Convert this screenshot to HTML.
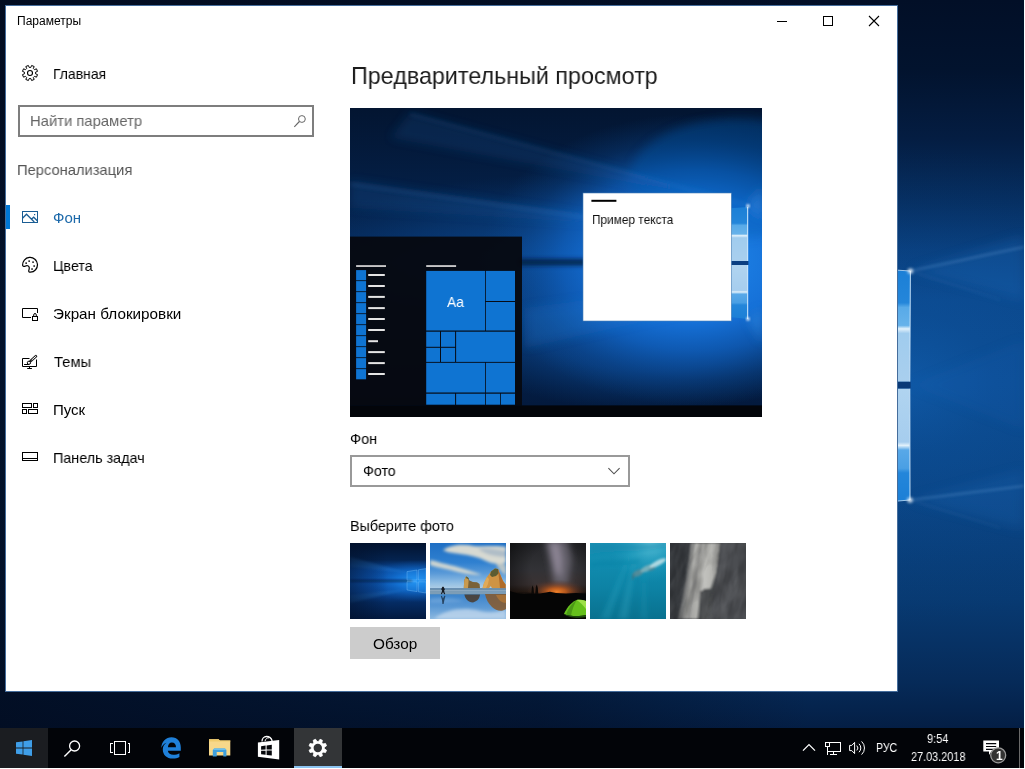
<!DOCTYPE html>
<html lang="ru">
<head>
<meta charset="utf-8">
<title>Параметры</title>
<style>
html,body{margin:0;padding:0;}
body{width:1025px;height:769px;background:#fff;overflow:hidden;position:relative;font-family:"Liberation Sans",sans-serif;color:#000;}
.abs{position:absolute;}
#desk{position:absolute;left:0;top:0;width:1024px;height:768px;overflow:hidden;background:#03122c;}
#win{position:absolute;left:5px;top:5px;width:891px;height:685px;background:#fff;border:1px solid #456d9c;}
.t{position:absolute;white-space:nowrap;line-height:1;transform-origin:0 0;will-change:transform;}
.nav{font-size:15px;color:#000;}
#taskbar{position:absolute;left:0;top:728px;width:1024px;height:40px;background:#020408;}

.ic{position:absolute;overflow:visible;}
.k{color:#000;}
</style>
</head>
<body>
<div id="desk">
<svg class="abs" style="left:0;top:0" width="1024" height="768" viewBox="0 0 1024 768">
<defs>
<linearGradient id="dbg" x1="0" y1="0" x2="0" y2="1">
<stop offset="0" stop-color="#020f27"/><stop offset="0.09" stop-color="#02132e"/><stop offset="0.18" stop-color="#041d42"/><stop offset="0.26" stop-color="#062e60"/><stop offset="0.325" stop-color="#093e7c"/><stop offset="0.39" stop-color="#0b488c"/><stop offset="0.5" stop-color="#0b4a8e"/><stop offset="0.64" stop-color="#0a4484"/><stop offset="0.78" stop-color="#083a72"/><stop offset="0.89" stop-color="#062a58"/><stop offset="0.95" stop-color="#041e44"/><stop offset="1" stop-color="#03132e"/>
</linearGradient>
<radialGradient id="dglow" cx="905" cy="385" r="300" gradientUnits="userSpaceOnUse" gradientTransform="translate(905 385) scale(1 0.8) translate(-905 -385)">
<stop offset="0" stop-color="#1a7adc" stop-opacity="0.3"/><stop offset="0.3" stop-color="#1266c0" stop-opacity="0.14"/><stop offset="1" stop-color="#0a4a90" stop-opacity="0"/>
</radialGradient>
<linearGradient id="dleft" x1="0" y1="0" x2="1" y2="0"><stop offset="0" stop-color="#020c20" stop-opacity="0.9"/><stop offset="0.6" stop-color="#020c20" stop-opacity="0.55"/><stop offset="0.9" stop-color="#020c20" stop-opacity="0"/></linearGradient>
<filter id="b6" x="-20%" y="-20%" width="140%" height="140%"><feGaussianBlur stdDeviation="6"/></filter>
<filter id="b2" x="-20%" y="-20%" width="140%" height="140%"><feGaussianBlur stdDeviation="1.5"/></filter>
</defs>
<rect width="1024" height="768" fill="url(#dbg)"/>
<rect width="1024" height="768" fill="url(#dglow)"/>
<rect width="900" height="768" fill="url(#dleft)"/>
<g filter="url(#b6)" opacity="0.5">
<polygon points="910,271 1024,236 1024,300" fill="#2a80d8" opacity="0.4"/>
<polygon points="910,500 1024,470 1024,530" fill="#2a80d8" opacity="0.3"/>
<polygon points="910,385 1024,340 1024,430" fill="#1f74d0" opacity="0.2"/>
</g>
<g>
<polygon points="880,269 910.4,271 909.8,381.8 880,381.8" fill="url(#ppu)"/>
<polygon points="880,388.4 909.8,388.4 910,500 880,502.5" fill="url(#ppl)"/>
<path d="M910.4 271L909.8 381.8M909.8 388.4L910 500" stroke="#cfe8fb" stroke-width="1.1" fill="none" opacity="0.85"/>
<path d="M880 269L910.4 271M880 502.5L910 500" stroke="#bfe0fa" stroke-width="1" fill="none" opacity="0.8"/>
<rect x="880" y="381.8" width="30.6" height="6.6" fill="#0a3a78"/>
</g>
<g filter="url(#b2)"><circle cx="910.4" cy="271" r="2.6" fill="#fff" opacity="0.9"/><circle cx="910" cy="500" r="2.6" fill="#fff" opacity="0.9"/>
<path d="M910 271L1024 247M910 500L1024 486" stroke="#9fd0ff" stroke-width="1.4" opacity="0.3" fill="none"/><path d="M910 271L1000 300M910 500L1000 528" stroke="#9fd0ff" stroke-width="1.2" opacity="0.12" fill="none"/></g>
</svg>
</div>

<div id="win"></div>
<div id="ui">
<span class="t" style="left:17.4px;top:15.24px;font-size:12px;color:#000;transform:scaleX(1.003);">Параметры</span>
<svg class="ic" style="left:777px;top:16px" width="110" height="11" viewBox="0 0 110 11"><path d="M0 5.5H10" stroke="#000" stroke-width="1" fill="none" shape-rendering="crispEdges"/><rect x="46.5" y="0.5" width="9" height="9" stroke="#000" stroke-width="1" fill="none" shape-rendering="crispEdges"/><path d="M92 0L102 10M102 0L92 10" stroke="#000" stroke-width="1.1" fill="none"/></svg>
<span class="t" style="left:53.3px;top:65.90px;font-size:15px;color:#000;transform:scaleX(0.93);">Главная</span>
<div class="abs" style="left:18px;top:105px;width:292px;height:28px;border:2px solid #7e7e7e;background:#fff"></div>
<span class="t" style="left:29.7px;top:113.10px;font-size:15px;color:#666;transform:scaleX(0.987);">Найти параметр</span>
<span class="t" style="left:16.7px;top:162.30px;font-size:15px;color:#555;transform:scaleX(0.981);">Персонализация</span>
<div class="abs" style="left:6px;top:205px;width:4px;height:24px;background:#0078d7"></div>
<span class="t" style="left:53.3px;top:209.70px;font-size:15px;color:#1c69aa;transform:scaleX(1.0);">Фон</span>
<span class="t" style="left:53.3px;top:257.90px;font-size:15px;color:#000;transform:scaleX(0.947);">Цвета</span>
<span class="t" style="left:53.3px;top:306.10px;font-size:15px;color:#000;transform:scaleX(1.017);">Экран блокировки</span>
<span class="t" style="left:53.8px;top:353.70px;font-size:15px;color:#000;transform:scaleX(0.983);">Темы</span>
<span class="t" style="left:53.3px;top:401.90px;font-size:15px;color:#000;transform:scaleX(0.988);">Пуск</span>
<span class="t" style="left:53.3px;top:450.10px;font-size:15px;color:#000;transform:scaleX(0.957);">Панель задач</span>
<span class="t" style="left:351px;top:63.88px;font-size:24px;color:#1c1c1c;transform:scaleX(0.9716);">Предварительный просмотр</span>
<div id="preview" class="abs" style="left:350px;top:108px;width:412px;height:309px;background:#04204a;overflow:hidden"><svg class="abs" style="left:0;top:0" width="412" height="309" viewBox="0 0 412 309">
<defs>
<linearGradient id="pbg" x1="0" y1="0" x2="0" y2="1">
<stop offset="0" stop-color="#031531"/><stop offset="0.3" stop-color="#042048"/><stop offset="0.5" stop-color="#062c5e"/><stop offset="0.72" stop-color="#052552"/><stop offset="1" stop-color="#03183a"/>
</linearGradient>
<radialGradient id="pglow" cx="345" cy="152" r="215" gradientUnits="userSpaceOnUse" gradientTransform="translate(345 152) scale(1 0.68) translate(-345 -152)">
<stop offset="0" stop-color="#2088ec" stop-opacity="1"/><stop offset="0.42" stop-color="#1672da" stop-opacity="0.97"/><stop offset="0.62" stop-color="#1062c2" stop-opacity="0.7"/><stop offset="0.82" stop-color="#0c50a0" stop-opacity="0.28"/><stop offset="1" stop-color="#0a4a90" stop-opacity="0"/>
</radialGradient>
<radialGradient id="pglow3" cx="300" cy="215" r="210" gradientUnits="userSpaceOnUse" gradientTransform="translate(300 215) scale(1 0.42) translate(-300 -215)">
<stop offset="0" stop-color="#1268cc" stop-opacity="0.75"/><stop offset="0.55" stop-color="#0e58b0" stop-opacity="0.45"/><stop offset="1" stop-color="#0a4a90" stop-opacity="0"/>
</radialGradient>
<radialGradient id="pglow2" cx="230" cy="150" r="300" gradientUnits="userSpaceOnUse" gradientTransform="translate(230 150) scale(1 0.28) translate(-230 -150)">
<stop offset="0" stop-color="#1266c4" stop-opacity="0.55"/><stop offset="0.6" stop-color="#0e58ac" stop-opacity="0.25"/><stop offset="1" stop-color="#0a4a90" stop-opacity="0"/>
</radialGradient>
<linearGradient id="ppu" x1="0" y1="0" x2="0" y2="1"><stop offset="0" stop-color="#1b7fd6"/><stop offset="0.3" stop-color="#2486da"/><stop offset="0.34" stop-color="#58aae8"/><stop offset="0.5" stop-color="#66b2ea"/><stop offset="0.53" stop-color="#e2f1fb"/><stop offset="0.57" stop-color="#a0ccee"/><stop offset="1" stop-color="#a9cfee"/></linearGradient>
<linearGradient id="ppl" x1="0" y1="0" x2="0" y2="1"><stop offset="0" stop-color="#b0d4f0"/><stop offset="0.47" stop-color="#a6cdee"/><stop offset="0.5" stop-color="#e2f1fb"/><stop offset="0.54" stop-color="#58a8e8"/><stop offset="0.7" stop-color="#4a9fe4"/><stop offset="0.74" stop-color="#2486da"/><stop offset="1" stop-color="#1b7fd6"/></linearGradient>
<filter id="pb5" x="-20%" y="-20%" width="140%" height="140%"><feGaussianBlur stdDeviation="5"/></filter>
<filter id="pb2" x="-20%" y="-20%" width="140%" height="140%"><feGaussianBlur stdDeviation="2"/></filter>
<filter id="pb1" x="-20%" y="-20%" width="140%" height="140%"><feGaussianBlur stdDeviation="0.8"/></filter>
</defs>
<rect width="412" height="309" fill="url(#pbg)"/>
<rect width="412" height="309" fill="url(#pglow2)"/>
<rect width="412" height="309" fill="url(#pglow3)"/>
<rect width="412" height="309" fill="url(#pglow)"/>
<g filter="url(#pb5)">
<polygon points="400,97 60,4 40,30" fill="#2a86e0" opacity="0.13"/>
<polygon points="330,120 0,72 0,100" fill="#2a86e0" opacity="0.14"/>
<ellipse cx="390" cy="70" rx="110" ry="60" fill="#0e58b0" opacity="0.35"/>
<polygon points="330,180 175,200 175,240 330,205" fill="#2a86e0" opacity="0.2"/>
<polygon points="398,98 412,80 412,110" fill="#3a96ee" opacity="0.4"/>
<polygon points="398,211 412,200 412,235" fill="#3a96ee" opacity="0.4"/>
</g>
<g filter="url(#pb2)">
<rect x="168" y="151" width="80" height="6.5" fill="#031938" opacity="0.8"/>
<path d="M398 97L60 6" stroke="#4aa0f0" stroke-width="1.4" opacity="0.22"/>
<path d="M330 122L0 76" stroke="#4aa0f0" stroke-width="1.4" opacity="0.3"/>
</g>
<g>
<polygon points="370,101 397.7,99 397.7,153 370,153" fill="url(#ppu)"/>
<polygon points="370,157 397.7,157 397.7,211 370,208" fill="url(#ppl)"/>
<path d="M397.7 99V153M397.7 157V211" stroke="#d8eeff" stroke-width="1" fill="none"/>
<rect x="370" y="153" width="28.4" height="4" fill="#0b3f82"/>
</g>
<g filter="url(#pb1)"><circle cx="398" cy="98" r="1.8" fill="#fff" opacity="0.9"/><circle cx="398" cy="211" r="1.8" fill="#fff" opacity="0.9"/></g>
<!-- start menu -->
<rect x="0" y="128.6" width="172" height="169" fill="#06090f" opacity="0.94"/>
<rect x="0" y="297.4" width="412" height="11.6" fill="#03050a"/>
<rect x="6.1" y="157.2" width="29.9" height="1.7" fill="#dcdcdc"/>
<rect x="76.2" y="157.2" width="29.9" height="1.7" fill="#dcdcdc"/>
<rect x="6.1" y="162.1" width="10" height="10.2" fill="#0f74d2"/><rect x="18.2" y="166.0" width="16.6" height="2" fill="#e4e4e4"/><rect x="6.1" y="173.1" width="10" height="10.2" fill="#0f74d2"/><rect x="18.2" y="177.0" width="16.6" height="2" fill="#e4e4e4"/><rect x="6.1" y="184.1" width="10" height="10.2" fill="#0f74d2"/><rect x="18.2" y="187.9" width="16.6" height="2" fill="#e4e4e4"/><rect x="6.1" y="195.1" width="10" height="10.2" fill="#0f74d2"/><rect x="18.2" y="199.1" width="16.6" height="2" fill="#e4e4e4"/><rect x="6.1" y="206.1" width="10" height="10.2" fill="#0f74d2"/><rect x="18.2" y="210.0" width="16.6" height="2" fill="#e4e4e4"/><rect x="6.1" y="217.1" width="10" height="10.2" fill="#0f74d2"/><rect x="18.2" y="221.0" width="16.6" height="2" fill="#e4e4e4"/><rect x="6.1" y="228.1" width="10" height="10.2" fill="#0f74d2"/><rect x="18.2" y="232.2" width="9.8" height="2" fill="#e4e4e4"/><rect x="6.1" y="239.1" width="10" height="10.2" fill="#0f74d2"/><rect x="18.2" y="243.1" width="16.6" height="2" fill="#e4e4e4"/><rect x="6.1" y="250.1" width="10" height="10.2" fill="#0f74d2"/><rect x="18.2" y="254.1" width="16.6" height="2" fill="#e4e4e4"/><rect x="6.1" y="261.1" width="10" height="10.2" fill="#0f74d2"/><rect x="18.2" y="265.0" width="16.6" height="2" fill="#e4e4e4"/>
<g fill="#0f74d2"><rect x="76.2" y="162.9" width="58.8" height="59.6"/><rect x="135.8" y="162.9" width="29.2" height="30.1"/><rect x="135.8" y="194" width="29.2" height="28.5"/><rect x="76.2" y="223.7" width="13.8" height="15.1"/><rect x="91" y="223.7" width="14.1" height="15.1"/><rect x="76.2" y="239.8" width="13.8" height="14.1"/><rect x="91" y="239.8" width="14.1" height="14.1"/><rect x="106.1" y="223.7" width="58.9" height="30.2"/><rect x="76.2" y="254.8" width="58.8" height="29.7"/><rect x="135.8" y="254.8" width="29.2" height="29.7"/><rect x="76.2" y="285.7" width="28.9" height="11.0"/><rect x="106.1" y="285.7" width="28.9" height="11.0"/><rect x="135.8" y="285.7" width="14.3" height="11.0"/><rect x="150.9" y="285.7" width="14.1" height="11.0"/></g>
<!-- sample window -->
<rect x="233" y="85" width="148.3" height="128" fill="#fff" stroke="#4a7fb5" stroke-width="0.6"/>
<rect x="241.4" y="91.8" width="25" height="2" fill="#000"/>
</svg>
<span class="t" style="left:97.3px;top:185.60px;font-size:15px;color:#fff;transform:scaleX(0.92)">Aa</span>
<span class="t" style="left:241.5px;top:104.60px;font-size:13px;color:#111;transform:scaleX(0.911)">Пример текста</span>
</div>
<span class="t" style="left:350px;top:430.70px;font-size:15px;color:#000;transform:scaleX(0.97);">Фон</span>
<div class="abs" style="left:350px;top:455px;width:276px;height:28px;border:2px solid #999;background:#fff"></div>
<span class="t" style="left:362.8px;top:462.90px;font-size:15px;color:#000;transform:scaleX(0.95);">Фото</span>
<svg class="ic" style="left:608px;top:467px" width="12" height="8" viewBox="0 0 12 8"><path d="M0.4 1.2L6 6.8L11.6 1.2" stroke="#505050" stroke-width="1.1" fill="none"/></svg>
<span class="t" style="left:350px;top:517.90px;font-size:15px;color:#000;transform:scaleX(0.955);">Выберите фото</span>
<div id="th0" class="abs" style="left:350px;top:543px;width:76px;height:76px;background:#246;overflow:hidden"><svg class="abs" style="left:0;top:0" width="76" height="76" viewBox="0 0 76 76">
<defs>
<linearGradient id="t0bg" x1="0" y1="0" x2="0" y2="1"><stop offset="0" stop-color="#02132f"/><stop offset="0.22" stop-color="#04234f"/><stop offset="0.36" stop-color="#0a4da4"/><stop offset="0.5" stop-color="#0c58b8"/><stop offset="0.64" stop-color="#0a4a9e"/><stop offset="0.78" stop-color="#052c64"/><stop offset="1" stop-color="#031a40"/></linearGradient>
<radialGradient id="t0g" cx="66" cy="38" r="50" gradientUnits="userSpaceOnUse" gradientTransform="translate(66 38) scale(1 0.42) translate(-66 -38)"><stop offset="0" stop-color="#2496f4" stop-opacity="1"/><stop offset="0.4" stop-color="#1478dc" stop-opacity="0.75"/><stop offset="1" stop-color="#0a50a0" stop-opacity="0"/></radialGradient>
<linearGradient id="t0l" x1="0" y1="0" x2="1" y2="0"><stop offset="0" stop-color="#02102a" stop-opacity="0.55"/><stop offset="0.5" stop-color="#02102a" stop-opacity="0"/></linearGradient>
<filter id="t0b" x="-20%" y="-20%" width="140%" height="140%"><feGaussianBlur stdDeviation="1.2"/></filter>
</defs>
<rect width="76" height="76" fill="url(#t0bg)"/>
<rect width="76" height="76" fill="url(#t0g)"/>
<g filter="url(#t0b)"><polygon points="60,30 0,14 0,24" fill="#3a9af0" opacity="0.22"/><polygon points="60,46 0,52 0,60" fill="#3a9af0" opacity="0.2"/><rect x="0" y="37" width="62" height="1.6" fill="#021230" opacity="0.8"/></g>
<rect width="76" height="76" fill="url(#t0l)"/><g fill="#2a9af4" fill-opacity="0.3" stroke="#8fd0ff" stroke-width="0.45" stroke-opacity="0.75"><polygon points="57,28.6 67,27 67,37 57,37.2"/><polygon points="57,38.6 67,38.8 67,48.6 57,47"/><polygon points="68.4,26.8 76,25.6 76,37 68.4,37"/><polygon points="68.4,38.8 76,38.8 76,50 68.4,48.8"/></g>
</svg></div>
<div id="th1" class="abs" style="left:430px;top:543px;width:76px;height:76px;background:#246;overflow:hidden"><svg class="abs" style="left:0;top:0" width="76" height="76" viewBox="0 0 76 76">
<defs>
<linearGradient id="t1s" x1="0" y1="0" x2="0" y2="1"><stop offset="0" stop-color="#1f6fc4"/><stop offset="0.42" stop-color="#2f80d0"/><stop offset="0.66" stop-color="#5a9ad8"/><stop offset="0.88" stop-color="#94c0e4"/><stop offset="1" stop-color="#b0cee6"/></linearGradient>
<linearGradient id="t1w" x1="0" y1="0" x2="0" y2="1"><stop offset="0" stop-color="#5f92c4"/><stop offset="0.25" stop-color="#3f86cc"/><stop offset="0.6" stop-color="#5a98d4"/><stop offset="1" stop-color="#8cb8e0"/></linearGradient>
<filter id="t1b" x="-20%" y="-20%" width="140%" height="140%"><feGaussianBlur stdDeviation="1.4"/></filter>
<filter id="t1c" x="-20%" y="-20%" width="140%" height="140%"><feGaussianBlur stdDeviation="0.5"/></filter>
</defs>
<rect width="76" height="46" fill="url(#t1s)"/>
<rect y="45" width="76" height="31" fill="url(#t1w)"/>
<g filter="url(#t1b)">
<path d="M13 7C22 1 34 1 44 3C54 4 66 2 76 4V20C70 22 62 21 56 18C48 14 40 12 30 11C22 10 16 9 13 7Z" fill="#e6e2d2" opacity="0.92"/>
<path d="M48 6C56 4 66 6 76 8V14C66 14 56 12 48 6Z" fill="#8ea6c0" opacity="0.55"/>
<path d="M0 17C6 18 14 21 24 23C34 26 44 29 52 32C42 32 30 30 20 27C12 25 4 24 0 22Z" fill="#e4e0d0" opacity="0.88"/>
<path d="M66 20C70 19 74 21 76 22V32C72 30 68 26 66 20Z" fill="#e8dcc0" opacity="0.7"/>
<path d="M4 76C16 66 34 64 50 68C58 70 66 70 76 66V76Z" fill="#c4daee" opacity="0.75"/>
<path d="M0 56C10 54 24 55 34 58C24 60 10 60 0 60Z" fill="#7fb0e0" opacity="0.5"/>
</g>
<g filter="url(#t1c)">
<path d="M33.8 45.3L34.2 37.5L36 33.4L38 34.5L39.5 37.5L43 39L47 39.2L49.6 41L50 45.3Z" fill="#7a6238"/>
<path d="M34.2 37.5L36 33.4L38 34.5L38.6 38L38 45.3L33.8 45.3Z" fill="#c89a50"/>
<path d="M36 33.4L38 34.5L39 36L36.5 35.5Z" fill="#4a5a3a"/>
<path d="M52.5 45.3L54 40L57 34L61 28.5L65 25.6L68 26L70 31L73 38L75.6 41.5V45.3L62 45.3L60.8 43L59 45.3Z" fill="#cf9444"/>
<path d="M61 28.5L65 25.6L68 26L69 30L66 33L62 34L60 32Z" fill="#5c5c30"/>
<path d="M68 26L70 31L73 38L75.6 41.5V45.3H70C69.5 38 68.5 32 68 26Z" fill="#b06c2c"/>
<path d="M54 40L57 34L59 36L58 41L56 45.3H52.5Z" fill="#e0aa58"/>
<rect x="0" y="45.3" width="76" height="6" fill="#6f8fa8" opacity="0.85"/>
<rect x="0" y="47.4" width="76" height="0.9" fill="#c6d6e0" opacity="0.6"/>
<rect x="0" y="49.6" width="76" height="0.8" fill="#d2dee6" opacity="0.45"/>
<path d="M34.4 51.5H50C49.6 55 48 58 43 59.4C38 59 35 56 34.4 51.5Z" fill="#4a3a28" opacity="0.85"/>
<path d="M55 51H76V66C72 69 66 68 62 64C58 60 56 56 55 51Z" fill="#86582a" opacity="0.85"/>
<path d="M66 52H76V60C72 60 68 57 66 52Z" fill="#b87a34" opacity="0.7"/>
</g>
<path d="M12.4 43.8H13.6L14.2 45L15 46.6L14.2 47L14.4 49L15.2 51L14.2 51.2L13 49L11.8 51.2L10.9 50.8L12 48.5L11.9 46.8L11 46.4L11.8 45Z" fill="#141820"/>
<path d="M12.4 61H13.6L14.4 57L15.4 53L14.4 52.8L13 55.4L11.8 52.8L10.9 53.2L12 57Z" fill="#14283c" opacity="0.75"/>
</svg></div>
<div id="th2" class="abs" style="left:510px;top:543px;width:76px;height:76px;background:#246;overflow:hidden"><svg class="abs" style="left:0;top:0" width="76" height="76" viewBox="0 0 76 76">
<defs>
<linearGradient id="t2s" x1="0" y1="0" x2="0" y2="1"><stop offset="0" stop-color="#252629"/><stop offset="0.35" stop-color="#323236"/><stop offset="0.55" stop-color="#3a3232"/><stop offset="0.64" stop-color="#2e2018"/><stop offset="0.68" stop-color="#0a0807"/><stop offset="1" stop-color="#040404"/></linearGradient>
<radialGradient id="t2o" cx="46.8" cy="48.6" r="30" gradientUnits="userSpaceOnUse" gradientTransform="translate(46.8 48.6) scale(1 0.4) translate(-46.8 -48.6)"><stop offset="0" stop-color="#ee8028"/><stop offset="0.3" stop-color="#c45e1e" stop-opacity="0.9"/><stop offset="0.65" stop-color="#7a4026" stop-opacity="0.5"/><stop offset="1" stop-color="#4a3028" stop-opacity="0"/></radialGradient>
<radialGradient id="t2v" cx="44" cy="26" r="52" gradientUnits="userSpaceOnUse"><stop offset="0.45" stop-color="#000" stop-opacity="0"/><stop offset="1" stop-color="#000" stop-opacity="0.55"/></radialGradient>
<filter id="t2b" x="-30%" y="-30%" width="160%" height="160%"><feGaussianBlur stdDeviation="3.2"/></filter>
<filter id="t2c" x="-30%" y="-30%" width="160%" height="160%"><feGaussianBlur stdDeviation="0.6"/></filter>
</defs>
<rect width="76" height="76" fill="url(#t2s)"/>
<g filter="url(#t2b)"><path d="M34 -6L58 -6L62 18L58 42L44 44L40 20Z" fill="#6a6672" opacity="0.85"/><path d="M40 0L49 0L52 16L51 34L46 30L42 14Z" fill="#a89eb0" opacity="0.6"/></g>
<rect width="76" height="50" fill="url(#t2v)"/>
<rect width="76" height="76" fill="url(#t2o)"/>
<path d="M0 48L6 50L14 51L20 50.5L30 50.6L36 49.4L40 48.8L46 50L56 50.6L66 50L76 50.4V76H0Z" fill="#050505"/>
<path d="M21.3 51L21.8 45L22.6 42.2L23.6 45.6L24 51ZM25.2 51L25.8 44L26.8 41.4L27.8 45L28.2 51Z" fill="#0c0907"/>
<g filter="url(#t2c)"><path d="M54 71C56 66 60 60 66.6 57C70 56.6 73 57 76 58V72C70 73.6 60 73.6 54 71Z" fill="#66c01e"/><path d="M66.6 57C70 56.6 73 57 76 58V66C73 62 70 59 66.6 57Z" fill="#9ee048"/><path d="M66.6 57C64 62 62 67 61 72.6L56 71.8C58 66 61.6 60.4 66.6 57Z" fill="#4c9a16"/><path d="M54 71C60 73.6 70 73.6 76 72V74C68 75.6 58 74.6 54 71Z" fill="#1f4a0c"/></g>
</svg></div>
<div id="th3" class="abs" style="left:590px;top:543px;width:76px;height:76px;background:#246;overflow:hidden"><svg class="abs" style="left:0;top:0" width="76" height="76" viewBox="0 0 76 76">
<defs>
<linearGradient id="t3s" x1="0" y1="0" x2="0" y2="1"><stop offset="0" stop-color="#1691b4"/><stop offset="0.3" stop-color="#108bae"/><stop offset="0.6" stop-color="#0d82a4"/><stop offset="1" stop-color="#09718f"/></linearGradient>
<radialGradient id="t3g" cx="60" cy="-4" r="44" gradientUnits="userSpaceOnUse"><stop offset="0" stop-color="#8adcec" stop-opacity="0.85"/><stop offset="0.45" stop-color="#48b8d4" stop-opacity="0.45"/><stop offset="1" stop-color="#1a98be" stop-opacity="0"/></radialGradient>
<filter id="t3b" x="-30%" y="-30%" width="160%" height="160%"><feGaussianBlur stdDeviation="2"/></filter>
<filter id="t3c" x="-30%" y="-30%" width="160%" height="160%"><feGaussianBlur stdDeviation="0.9"/></filter>
</defs>
<rect width="76" height="76" fill="url(#t3s)"/>
<rect width="76" height="76" fill="url(#t3g)"/>
<g filter="url(#t3b)"><polygon points="42,6 10,76 20,76" fill="#3ab4d0" opacity="0.22"/><polygon points="46,10 28,76 38,76" fill="#3ab4d0" opacity="0.25"/><polygon points="54,20 50,76 58,76" fill="#3ab4d0" opacity="0.14"/><path d="M0 12C20 6 40 12 76 4V0H0Z" fill="#0d86ac" opacity="0.5"/><path d="M0 22C20 18 36 22 50 18" stroke="#0c7ea2" stroke-width="3" fill="none" opacity="0.5"/></g>
<g filter="url(#t3c)"><ellipse cx="48" cy="30" rx="6" ry="3" transform="rotate(-24 48 30)" fill="#5a8c98" opacity="0.9"/><ellipse cx="57" cy="25.4" rx="7" ry="2.8" transform="rotate(-26 57 25.4)" fill="#86b4bc" opacity="0.85"/><ellipse cx="68" cy="20" rx="9" ry="2.6" transform="rotate(-28 68 20)" fill="#cfe8ec" opacity="0.8"/><ellipse cx="62" cy="26" rx="4" ry="1.5" transform="rotate(-26 62 26)" fill="#4f8694" opacity="0.8"/><path d="M43.6 31.5L42.8 35.6" stroke="#3f7482" stroke-width="1.6" stroke-linecap="round" fill="none"/></g>
</svg></div>
<div id="th4" class="abs" style="left:670px;top:543px;width:76px;height:76px;background:#246;overflow:hidden"><svg class="abs" style="left:0;top:0" width="76" height="76" viewBox="0 0 76 76">
<defs>
<filter id="t4n" x="0" y="0" width="100%" height="100%"><feTurbulence type="fractalNoise" baseFrequency="0.12 0.04" numOctaves="3" seed="4"/><feColorMatrix type="matrix" values="0 0 0 0 0  0 0 0 0 0  0 0 0 0 0  1.6 0 0 0 -0.62"/></filter>
<filter id="t4m" x="0" y="0" width="100%" height="100%"><feTurbulence type="fractalNoise" baseFrequency="0.12 0.04" numOctaves="3" seed="9"/><feColorMatrix type="matrix" values="0 0 0 0 1  0 0 0 0 1  0 0 0 0 1  1.6 0 0 0 -0.7"/></filter>
<filter id="t4b" x="-30%" y="-30%" width="160%" height="160%"><feGaussianBlur stdDeviation="1"/></filter>
<linearGradient id="t4s" x1="0" y1="0" x2="1" y2="0"><stop offset="0" stop-color="#7d7e7d"/><stop offset="0.35" stop-color="#a9a9a6"/><stop offset="0.65" stop-color="#c2c2be"/><stop offset="1" stop-color="#a0a09d"/></linearGradient>
</defs>
<rect width="76" height="76" fill="#46494c"/>
<rect width="22" height="76" fill="#35383c"/>
<g filter="url(#t4b)">
<polygon points="21,0 50,0 46,30 40,48 30,48 28,76 8,76 14,50 18,24" fill="url(#t4s)"/>
<polygon points="22,0 25,0 13,76 9,76" fill="#5f6162" opacity="0.6"/>
<polygon points="30,0 32,0 20,76 18,76" fill="#77797a" opacity="0.4"/>
<polygon points="30,50 34,46 41,45.5 42,50 39,76 29,76" fill="#474a4c"/>
<polygon points="50,0 76,0 76,76 40,76 42,50 46,30" fill="#4b4e51"/>
</g>
<g transform="rotate(12 38 38) scale(1.3) translate(-8 -8)"><rect width="76" height="76" filter="url(#t4n)" opacity="0.32"/><rect width="76" height="76" filter="url(#t4m)" opacity="0.12"/></g>
</svg></div>
<div class="abs" style="left:350px;top:627px;width:90px;height:32px;background:#ccc"></div>
<span class="t" style="left:372.8px;top:636.20px;font-size:15px;color:#000;transform:scaleX(1.02);">Обзор</span>
<svg class="ic" style="left:22px;top:65px" width="16" height="16" viewBox="0 0 16 16"><path d="M13.54 8.79 L15.53 9.62 L14.47 12.18 L12.48 11.36 L11.36 12.48 L12.18 14.47 L9.62 15.53 L8.79 13.54 L7.21 13.54 L6.38 15.53 L3.82 14.47 L4.64 12.48 L3.52 11.36 L1.53 12.18 L0.47 9.62 L2.46 8.79 L2.46 7.21 L0.47 6.38 L1.53 3.82 L3.52 4.64 L4.64 3.52 L3.82 1.53 L6.38 0.47 L7.21 2.46 L8.79 2.46 L9.62 0.47 L12.18 1.53 L11.36 3.52 L12.48 4.64 L14.47 3.82 L15.53 6.38 L13.54 7.21Z" fill="none" stroke="#000" stroke-width="1" stroke-linejoin="round"/><circle cx="8" cy="8" r="2.5" fill="none" stroke="#000" stroke-width="1.1"/></svg>
<svg class="ic" style="left:293px;top:114px" width="14" height="14" viewBox="0 0 14 14"><circle cx="8.9" cy="5" r="3.4" fill="none" stroke="#666" stroke-width="1"/><path d="M6.4 7.5L1.3 12.8" stroke="#666" stroke-width="1.1" fill="none"/></svg>
<svg class="ic" style="left:22px;top:211px" width="16" height="12" viewBox="0 0 16 12"><rect x="0.5" y="0.5" width="15" height="11" fill="none" stroke="#1a5d94" stroke-width="1"/><path d="M0.5 7.2L4.5 3.2L12.3 11M9.4 8.2L11.7 6.2L15.5 10" fill="none" stroke="#1a5d94" stroke-width="1.25"/><rect x="12" y="3" width="1.2" height="1.2" fill="#1a5d94"/></svg>
<svg class="ic" style="left:22px;top:257px" width="16" height="16" viewBox="0 0 16 16"><path d="M0.7 8.6A7.4 7.4 0 1 1 8.4 15.2C7.4 15.2 6.6 14.8 6.7 13.9C6.8 12.9 7.5 11.9 7.2 10.3C6.9 8.7 5 8.2 3.6 9C2.2 9.8 0.9 9.5 0.7 8.6Z" fill="none" stroke="#000" stroke-width="1.2"/><g fill="#000"><rect x="3.4" y="5.4" width="1.5" height="1.5"/><rect x="6.4" y="3.4" width="1.5" height="1.5"/><rect x="10.3" y="4.4" width="1.5" height="1.5"/><rect x="11.4" y="8.3" width="1.5" height="1.5"/><rect x="9.3" y="11.3" width="1.5" height="1.5"/></g></svg>
<svg class="ic" style="left:22px;top:307px" width="16" height="14" viewBox="0 0 16 14"><path d="M9 10.5H0.5V1.5H15.5V6" fill="none" stroke="#000" stroke-width="1"/><rect x="10.5" y="9.5" width="5" height="4" fill="none" stroke="#000" stroke-width="1"/><path d="M11.7 9.5V8A1.3 1.5 0 0 1 14.3 8V9.5" fill="none" stroke="#000" stroke-width="1"/></svg>
<svg class="ic" style="left:22px;top:355px" width="16" height="14" viewBox="0 0 16 14"><path d="M7.5 3.5H0.5V11.5H14.5V4.5" fill="none" stroke="#000" stroke-width="1"/><path d="M7.5 11.5V13.5M5.2 13.5H9.9" fill="none" stroke="#000" stroke-width="1"/><path d="M13.9 1.3L8.6 5.9" stroke="#222" stroke-width="2.7" stroke-linecap="round" fill="none"/><path d="M13.8 1.4L10 4.7" stroke="#fff" stroke-width="1" stroke-linecap="round" fill="none"/><circle cx="6.9" cy="7.8" r="1.6" fill="#fff" stroke="#000" stroke-width="1"/><path d="M2.1 9.5H6.9" stroke="#000" stroke-width="1" fill="none"/></svg>
<svg class="ic" style="left:22px;top:403px" width="16" height="11" viewBox="0 0 16 11" shape-rendering="crispEdges"><g fill="none" stroke="#000" stroke-width="1"><rect x="0.5" y="0.5" width="9" height="4"/><rect x="11.5" y="0.5" width="4" height="4"/><rect x="0.5" y="6.5" width="4" height="4"/><rect x="6.5" y="6.5" width="9" height="4"/></g></svg>
<svg class="ic" style="left:22px;top:452px" width="16" height="9" viewBox="0 0 16 9" shape-rendering="crispEdges"><rect x="0.5" y="0.5" width="15" height="8" fill="none" stroke="#000" stroke-width="1"/><path d="M0.5 6.5H15.5" stroke="#000" stroke-width="1"/></svg>
<!--ICONS-->
</div>

<div id="taskbar">
<div class="abs" style="left:0;top:0;width:48px;height:40px;background:#1b1d21"></div>
<svg class="ic" style="left:16px;top:12px" width="16" height="16" viewBox="0 0 16 16"><g fill="#3f9ee8"><polygon points="0,2.3 6.6,1.4 6.6,7.6 0,7.6"/><polygon points="7.4,1.3 16,0 16,7.6 7.4,7.6"/><polygon points="0,8.4 6.6,8.4 6.6,14.6 0,13.7"/><polygon points="7.4,8.4 16,8.4 16,16 7.4,14.7"/></g></svg>
<svg class="ic" style="left:62px;top:10px" width="22" height="22" viewBox="0 0 22 22"><circle cx="12.6" cy="8" r="5" fill="none" stroke="#fff" stroke-width="1.3"/><path d="M9.2 11.8L2.4 18.6" stroke="#fff" stroke-width="1.4" fill="none"/></svg>
<svg class="ic" style="left:108px;top:11px" width="24" height="18" viewBox="0 0 24 18" shape-rendering="crispEdges"><rect x="6.5" y="2.5" width="11" height="13" fill="none" stroke="#fff" stroke-width="1"/><path d="M4.5 4.5H2.5V13.5H4.5M19.5 4.5H21.5V13.5H19.5" fill="none" stroke="#fff" stroke-width="1"/></svg>
<svg class="ic" style="left:161px;top:9px" width="20" height="22" viewBox="0 0 20 22"><path fill="#1f80d9" fill-rule="evenodd" d="M0.3 11C0.5 4.5 5 0.2 10.5 0.2C16.5 0.2 19.8 4.5 19.8 10.5V13.8H6.8C7.2 16.5 9.5 17.8 12.3 17.8C14.6 17.8 16.8 17.2 18.4 16.2V20C16.6 21 14.4 21.5 11.8 21.5C5.5 21.5 1.8 17.6 1.8 12.4C1.8 9.6 3.2 7.2 5.6 5.8C3 6.6 1.2 8.6 0.3 11ZM6.9 10.2H15C15 7.3 13.4 5.6 10.8 5.6C8.6 5.6 7.2 7.6 6.9 10.2Z"/></svg>
<svg class="ic" style="left:209px;top:10px" width="22" height="19" viewBox="0 0 22 19"><path d="M0 1.2H9.5L11 2.6H21.3V17.6H0Z" fill="#f7d88a"/><path d="M0 1.2H9.5L11 2.6H21.3V3.6H0Z" fill="#f0cb6c"/><path d="M3.8 18.6V12L5.2 10.6H16L17.4 12V18.6H14.3V14H7.7V18.6Z" fill="#3f9fdc"/><path d="M5.2 10.6H16L17.4 12H3.8Z" fill="#6cc0ee"/></svg>
<svg class="ic" style="left:257px;top:7px" width="23" height="26" viewBox="0 0 23 26"><path d="M5 6.5C5 3.5 7 1.5 9.5 1.5C12 1.5 14.5 3.5 15.2 6" fill="none" stroke="#fff" stroke-width="1.3"/><path d="M8 6.2C8.5 4 10 2.6 12 2.8" fill="none" stroke="#fff" stroke-width="1"/><path d="M0.9 7.4L22.2 5V24.5L0.9 21.8Z" fill="#fff"/><g fill="#05070b"><polygon points="4.1,11.2 8.6,10.6 8.6,14.6 4.1,14.8"/><polygon points="9.6,10.5 14.8,9.8 14.8,14.4 9.6,14.6"/><polygon points="4.1,15.8 8.6,15.7 8.6,19.8 4.1,19.3"/><polygon points="9.6,15.6 14.8,15.5 14.8,20.6 9.6,19.9"/></g></svg>
<div class="abs" style="left:294px;top:0;width:48px;height:40px;background:#333537"></div>
<div class="abs" style="left:294px;top:38px;width:48px;height:2px;background:#8cc3f0"></div>
<svg class="ic" style="left:294px;top:0" width="48" height="40" viewBox="0 0 48 40"><path d="M30.35 20.78 L32.52 22.24 L31.55 24.58 L28.98 24.09 L27.89 25.18 L28.38 27.75 L26.04 28.72 L24.58 26.55 L23.02 26.55 L21.56 28.72 L19.22 27.75 L19.71 25.18 L18.62 24.09 L16.05 24.58 L15.08 22.24 L17.25 20.78 L17.25 19.22 L15.08 17.76 L16.05 15.42 L18.62 15.91 L19.71 14.82 L19.22 12.25 L21.56 11.28 L23.02 13.45 L24.58 13.45 L26.04 11.28 L28.38 12.25 L27.89 14.82 L28.98 15.91 L31.55 15.42 L32.52 17.76 L30.35 19.22Z" fill="#fff" stroke="#fff" stroke-width="0.8" stroke-linejoin="round"/><circle cx="23.80000000000001" cy="20" r="4.2" fill="#333537"/></svg>
<svg class="ic" style="left:802px;top:15px" width="14" height="9" viewBox="0 0 14 9"><path d="M1 7.6L7 1.6L13 7.6" fill="none" stroke="#fff" stroke-width="1.3"/></svg>
<svg class="ic" style="left:825px;top:13px" width="17" height="15" viewBox="0 0 17 15" shape-rendering="crispEdges"><rect x="2.5" y="1.5" width="13" height="9" fill="none" stroke="#fff" stroke-width="1"/><rect x="0.5" y="1.5" width="4" height="4" fill="#05070b" stroke="#fff" stroke-width="1"/><path d="M2.5 5.5V13.5M5 13.5H12M8.5 10.5V13.5" fill="none" stroke="#fff" stroke-width="1"/></svg>
<svg class="ic" style="left:849px;top:13px" width="18" height="14" viewBox="0 0 18 14"><path d="M0.6 4.4H2.8L5.6 1.4V12.6L2.8 9.6H0.6Z" fill="none" stroke="#fff" stroke-width="1"/><path d="M7.8 4.6A3.4 3.4 0 0 1 7.8 9.4M10 2.8A5.8 5.8 0 0 1 10 11.2M12.6 0.4A9 9 0 0 1 12.6 13.6" fill="none" stroke="#fff" stroke-width="1"/></svg>
<span class="t" style="left:875.8px;top:14.24px;font-size:12px;color:#fff;transform:scaleX(0.885);">РУС</span>
<span class="t" style="left:927px;top:4.64px;font-size:12px;color:#fff;transform:scaleX(0.916);">9:54</span>
<span class="t" style="left:911.2px;top:23.04px;font-size:12px;color:#fff;transform:scaleX(0.906);">27.03.2018</span>
<svg class="ic" style="left:983px;top:12px" width="24" height="24" viewBox="0 0 24 24"><path d="M0.3 0.6H16V11.4H8.4L6 15V11.4H0.3Z" fill="#fff"/><path d="M3 3.6H13.2M3 6.5H13.2M3 9.4H13.2" stroke="#05070b" stroke-width="1.1" fill="none"/><circle cx="15.2" cy="15.3" r="7.5" fill="#333" stroke="#9a9a9a" stroke-width="1.3"/></svg>
<span class="t" style="left:995.6px;top:22.04px;font-size:12px;color:#fff;transform:scaleX(1.0);font-weight:bold;">1</span>
<div class="abs" style="left:1019px;top:0;width:1px;height:40px;background:#6a6a6a"></div>
</div>
</body>
</html>
